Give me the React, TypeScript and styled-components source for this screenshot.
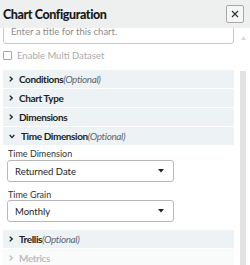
import React, { useLayoutEffect, useRef } from 'react'
import styled, { createGlobalStyle } from 'styled-components'

const GlobalStyle = createGlobalStyle`
  html, body {
    margin: 0;
    padding: 0;
    background: #fff;
  }
  body {
    font-family: Lato, 'Open Sans', sans-serif;
    color: #1e1e1e;
  }
`

const Panel = styled.div`
  width: 250px;
  height: 265px;
  display: flex;
  flex-direction: column;
  overflow: hidden;
  background: #fff;
`

const Header = styled.header`
  flex: none;
  height: 28px;
  display: flex;
  align-items: center;
  justify-content: space-between;
  padding: 0 6px 0 3px;
  background: #eef0f0;
`

const Title = styled.h1`
  margin: 0;
  font-size: 12.5px;
  font-weight: 900;
  letter-spacing: -0.4px;
  color: #1a1a1a;
`

const CloseButton = styled.button`
  width: 18px;
  height: 18px;
  padding: 0;
  display: flex;
  align-items: center;
  justify-content: center;
  border: 1px solid #a8a8a8;
  border-radius: 2px;
  background: #f6f6f6;
  color: #333;
`

const Body = styled.div`
  flex: 1;
  min-height: 0;
  display: flex;
`

const Scroller = styled.div`
  flex: 1;
  overflow-y: auto;
  padding-left: 3px;
  scrollbar-width: none;
  &::-webkit-scrollbar {
    display: none;
  }
`

const Track = styled.div`
  flex: none;
  width: 6px;
  margin: 0 4px 0 6px;
  display: flex;
  flex-direction: column;
  align-items: center;
`

const Thumb = styled.div`
  flex: 1;
  width: 6px;
  margin-top: 31px;
  background: #e2e2e2;
`

const TextInput = styled.input`
  box-sizing: border-box;
  display: block;
  width: 100%;
  height: 26px;
  padding: 0 7px;
  border: 1px solid #c9c9c9;
  border-radius: 3px;
  font: 9.5px Lato, sans-serif;
  &::placeholder {
    color: #8c8c8c;
  }
`

const CheckRow = styled.label`
  display: flex;
  align-items: center;
  gap: 5px;
  height: 10px;
  margin-top: 6px;
  font-size: 9.5px;
  color: #ababab;
`

const Box = styled.span`
  width: 7px;
  height: 7px;
  border: 1px solid #a5a5a5;
  border-radius: 1px;
`

const Accordion = styled.div`
  display: flex;
  flex-direction: column;
  gap: 1px;
  margin-top: 10px;
`

const Row = styled.div<{ $faded?: boolean }>`
  height: 18px;
  display: flex;
  align-items: center;
  gap: 6px;
  padding-left: 6px;
  background: #edf2f4;
  font-size: 10px;
  font-weight: 700;
  letter-spacing: -0.4px;
  color: #1e1e1e;
  opacity: ${({ $faded }) => ($faded ? 0.3 : 1)};
`

const Optional = styled.span`
  font-style: italic;
  font-weight: 400;
  color: #5f6b75;
`

const Fields = styled.div`
  display: flex;
  flex-direction: column;
  padding: 3px 60px 7px 4px;
`

const FieldLabel = styled.div<{ $first?: boolean }>`
  height: 10px;
  line-height: 10px;
  margin: ${({ $first }) => ($first ? '0 0 1px' : '8px 0 0')};
  padding-left: 1px;
  font-size: 9px;
  color: #333;
`

const Select = styled.div`
  box-sizing: border-box;
  height: 22px;
  display: flex;
  align-items: center;
  justify-content: space-between;
  padding: 0 9px 0 7px;
  border: 1px solid #b8b8b8;
  border-radius: 3px;
  font-size: 9.5px;
  color: #222;
`

function Chevron({ open }: { open?: boolean }) {
  return open ? (
    <svg width="6" height="5" viewBox="0 0 6 5">
      <path d="M0.7 1 L3 3.6 L5.3 1" fill="none" stroke="#222" strokeWidth="1.3" />
    </svg>
  ) : (
    <svg width="4" height="6" viewBox="0 0 4 6">
      <path d="M0.7 0.6 L3.2 3 L0.7 5.4" fill="none" stroke="#222" strokeWidth="1.3" />
    </svg>
  )
}

function Caret() {
  return (
    <svg width="6" height="4" viewBox="0 0 6 4">
      <path d="M0 0 H6 L3 3.5 Z" fill="#222" />
    </svg>
  )
}

function Section({ title, optional, open, faded }: { title: string; optional?: boolean; open?: boolean; faded?: boolean }) {
  return (
    <Row $faded={faded}>
      <Chevron open={open} />
      <span>
        {title}
        {optional && <Optional>(Optional)</Optional>}
      </span>
    </Row>
  )
}

export default function App() {
  const scroller = useRef<HTMLDivElement>(null)

  useLayoutEffect(() => {
    if (scroller.current) scroller.current.scrollTop = 10
  }, [])

  return (
    <Panel>
      <GlobalStyle />
      <Header>
        <Title>Chart Configuration</Title>
        <CloseButton aria-label="Close">
          <svg width="8" height="8" viewBox="0 0 8 8">
            <path d="M1 1 L7 7 M7 1 L1 7" stroke="#333" strokeWidth="1.2" />
          </svg>
        </CloseButton>
      </Header>
      <Body>
        <Scroller ref={scroller}>
          <TextInput placeholder="Enter a title for this chart." />
          <CheckRow>
            <Box />
            Enable Multi Dataset
          </CheckRow>
          <Accordion>
            <Section title="Conditions" optional />
            <Section title="Chart Type" />
            <Section title="Dimensions" />
            <Section title="Time Dimension" optional open />
            <Fields>
              <FieldLabel $first>Time Dimension</FieldLabel>
              <Select>
                Returned Date
                <Caret />
              </Select>
              <FieldLabel>Time Grain</FieldLabel>
              <Select>
                Monthly
                <Caret />
              </Select>
            </Fields>
            <Section title="Trellis" optional />
            <Section title="Metrics" faded />
          </Accordion>
        </Scroller>
        <Track>
          <svg width="5" height="4" viewBox="0 0 5 4" style={{ marginTop: 8 }}>
            <path d="M0 4 L2.5 0 L5 4 Z" fill="#d8d8d8" />
          </svg>
          <Thumb />
        </Track>
      </Body>
    </Panel>
  )
}
